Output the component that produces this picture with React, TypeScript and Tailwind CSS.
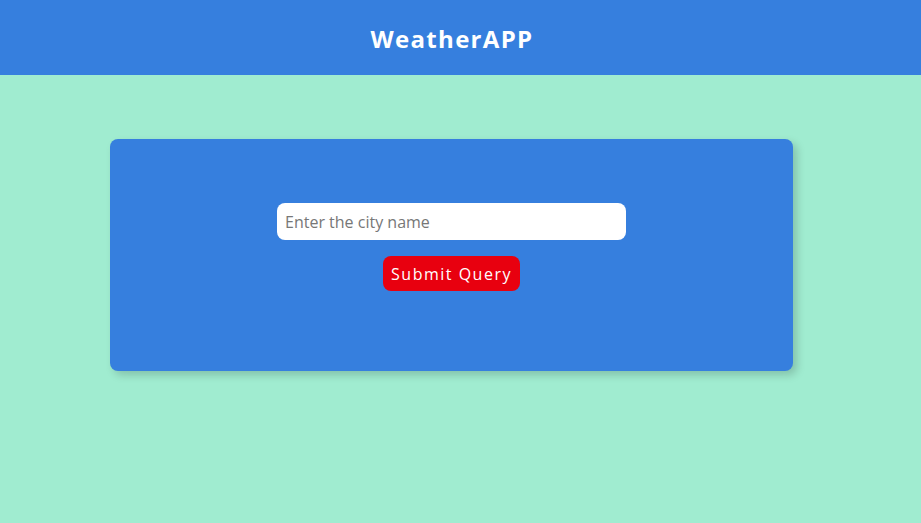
import React from "react";

export default function App() {
  return (
    <div
      className="min-h-screen bg-[#a0ecd0] pr-[17px]"
      style={{ fontFamily: '"Open Sans", "Noto Sans", sans-serif' }}
    >
      {/* Header */}
      <header className="h-[75px] bg-[#367fde] flex items-center justify-center -mr-[17px] pr-[17px] pt-[3px]">
        <h1 className="text-[24px] font-bold text-white tracking-[1.3px]">WeatherAPP</h1>
      </header>

      {/* Search card */}
      <main className="pt-[64px] pl-[110px]">
        <div className="w-[683px] bg-[#367fde] rounded-[8px] h-[232px] shadow-[4px_4px_8px_rgba(0,0,0,0.18)] flex flex-col items-center pt-[64px]">
          <input
            type="text"
            placeholder="Enter the city name"
            className="w-[349px] h-[37px] rounded-[8px] bg-white px-2 text-[16px] text-gray-800 placeholder:text-[#777] focus:outline-none"
          />
          <button className="mt-[16px] h-[35px] px-[8px] rounded-[8px] bg-[#e8000f] text-white text-[16px] tracking-[1.5px]">
            Submit Query
          </button>
        </div>
      </main>
    </div>
  );
}
